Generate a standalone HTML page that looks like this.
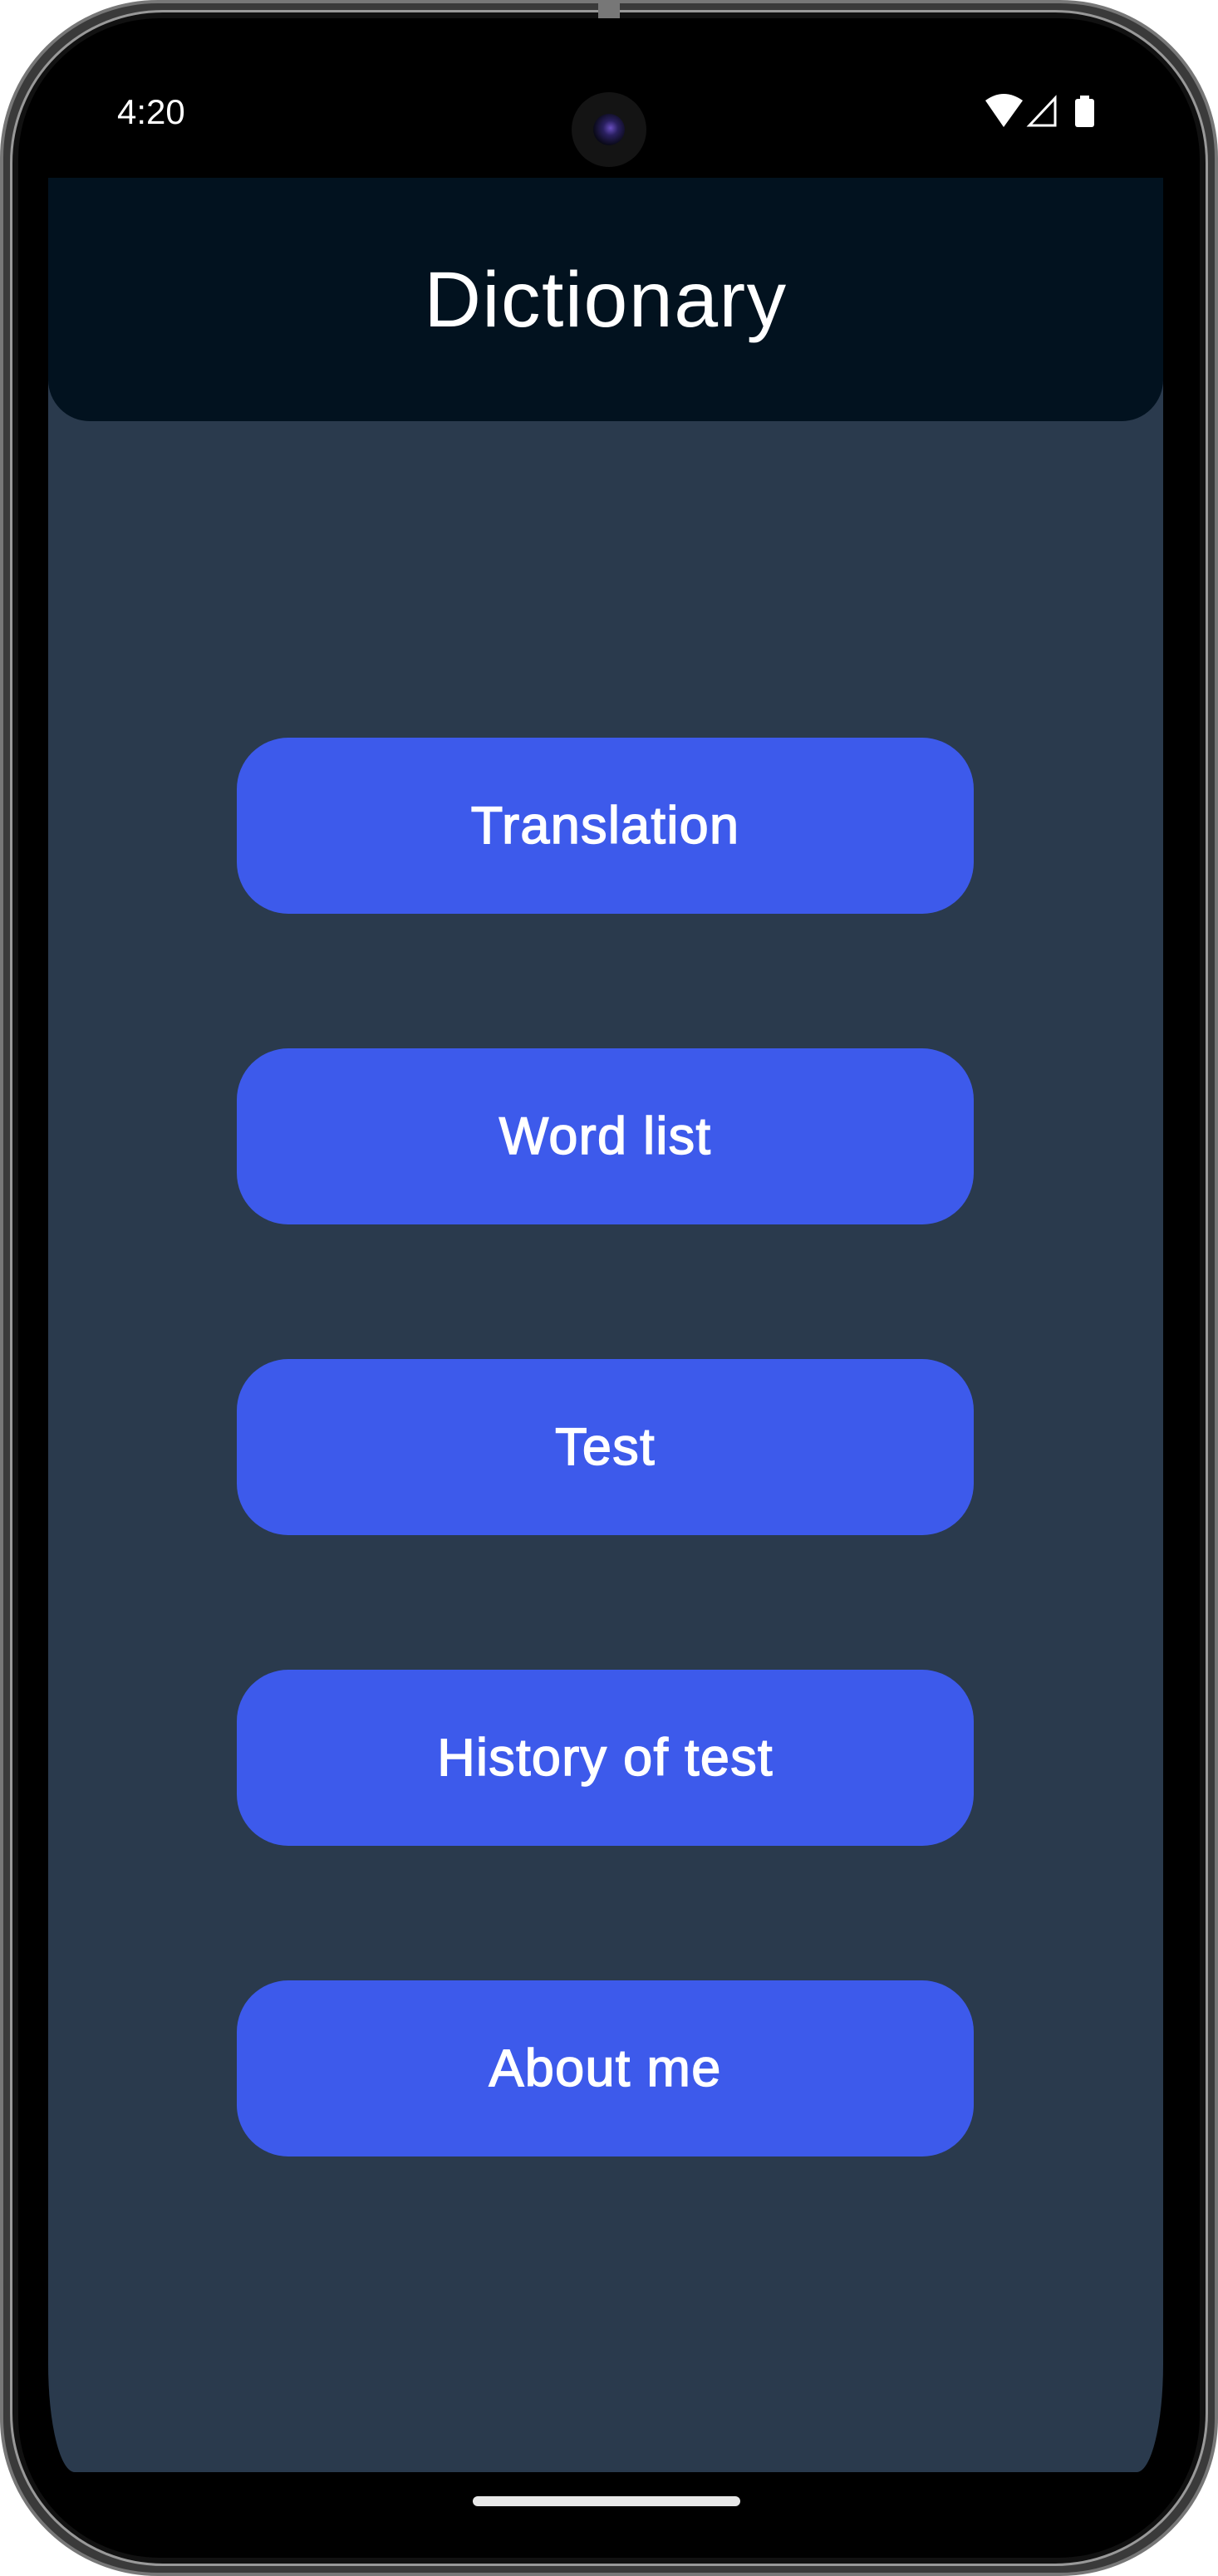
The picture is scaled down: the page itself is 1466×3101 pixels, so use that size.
<!DOCTYPE html>
<html><head><meta charset="utf-8"><style>
html,body{margin:0;padding:0;background:#fff;}
body{width:1466px;height:3101px;position:relative;overflow:hidden;font-family:"Liberation Sans",sans-serif;}
.frame{position:absolute;left:0;top:0;width:1466px;height:3101px;border-radius:190px;background:#3a3a3a;box-sizing:border-box;border:4px solid #777;}
.frame2{position:absolute;left:8px;top:8px;right:8px;bottom:8px;border-radius:184px;background:#111;border:3px solid #999;}
.inner{position:absolute;left:22px;top:22px;width:1422px;height:3057px;border-radius:170px;background:#000;}
.screen{position:absolute;left:58px;top:214px;width:1342px;height:2762px;background:#2a3a4d;border-radius:0 0 32px 32px/0 0 130px 130px;overflow:hidden;}
.header{position:absolute;left:0;top:0;width:1342px;height:293px;background:#02121f;border-radius:0 0 50px 50px;}
.header span{position:absolute;left:0;right:0;top:92px;text-align:center;color:#fff;font-size:95px;line-height:110px;letter-spacing:1.5px;}
.btn{position:absolute;left:227px;width:887px;height:212px;background:#3d5aeb;border-radius:62px;color:#fff;font-size:63px;text-align:center;line-height:212px;-webkit-text-stroke:1.5px #fff;letter-spacing:1.3px;}
.time{position:absolute;left:141px;top:110px;color:#fff;font-size:42px;line-height:50px;}
.cam{position:absolute;left:688px;top:111px;width:90px;height:90px;border-radius:50%;background:#141414;}
.cam div{position:absolute;left:26px;top:26px;width:38px;height:38px;border-radius:50%;background:radial-gradient(circle at 55% 45%,#6a4fc0 0,#2a2060 30%,#0a0a18 70%);}
.home{position:absolute;left:569px;top:3005px;width:322px;height:12px;border-radius:6px;background:#e8e8e8;}
</style></head><body>
<div class="frame"><div class="frame2"></div></div>
<div class="inner"></div>
<div style="position:absolute;left:720px;top:0;width:26px;height:22px;background:#777"></div>
<div class="time">4:20</div>
<div class="cam"><div></div></div>
<svg style="position:absolute;left:1180px;top:110px" width="150" height="50" viewBox="1180 110 150 50">
<path d="M1186 121 Q1208 105 1231 121 L1208 153 Z" fill="#fff"/>
<path d="M1270 118 L1270 151 L1239 151 Z" fill="none" stroke="#fff" stroke-width="3"/>
<rect x="1294" y="119" width="23" height="34" rx="3" fill="#fff"/>
<rect x="1300" y="115" width="11" height="5" fill="#fff"/>
</svg>
<div class="screen">
<div class="header"><span>Dictionary</span></div>
<div class="btn" style="top:674px">Translation</div>
<div class="btn" style="top:1048px">Word list</div>
<div class="btn" style="top:1422px">Test</div>
<div class="btn" style="top:1796px">History of test</div>
<div class="btn" style="top:2170px">About me</div>
</div>
<div class="home"></div>
</body></html>
